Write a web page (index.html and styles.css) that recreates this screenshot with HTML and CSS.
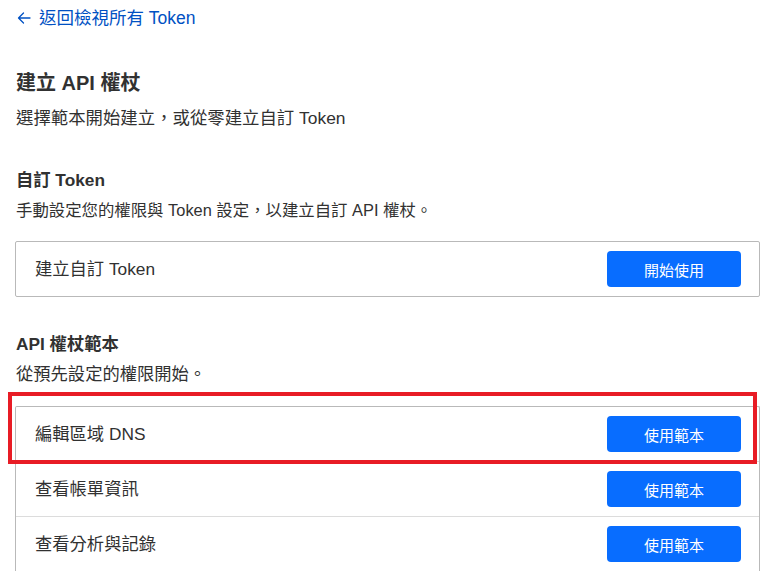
FILE: index.html
```html
<!DOCTYPE html>
<html lang="zh-Hant">
<head>
<meta charset="utf-8">
<title>建立 API 權杖</title>
<link rel="stylesheet" href="styles.css">
</head>
<body>
<div class="page">
  <a class="back" href="#">
    <svg class="back-icon" width="14" height="14" viewBox="0 0 14 14" aria-hidden="true"><path d="M13 7H1.5M6.5 2L1.5 7l5 5" fill="none" stroke="currentColor" stroke-width="1.3" stroke-linecap="round" stroke-linejoin="round"/></svg>
    <span>返回檢視所有 Token</span>
  </a>
  <h1 class="title">建立 API 權杖</h1>
  <p class="subtitle">選擇範本開始建立，或從零建立自訂 Token</p>

  <h2 class="section-title">自訂 Token</h2>
  <p class="section-desc narrow">手動設定您的權限與 Token 設定，以建立自訂 API 權杖。</p>
  <div class="card first">
    <div class="row"><span class="row-label">建立自訂 Token</span><button class="btn">開始使用</button></div>
  </div>

  <h2 class="section-title second">API 權杖範本</h2>
  <p class="section-desc">從預先設定的權限開始。</p>
  <div class="templates">
    <div class="card">
      <div class="row"><span class="row-label">編輯區域 DNS</span><button class="btn">使用範本</button></div>
      <div class="row"><span class="row-label">查看帳單資訊</span><button class="btn">使用範本</button></div>
      <div class="row"><span class="row-label">查看分析與記錄</span><button class="btn">使用範本</button></div>
    </div>
    <div class="highlight"></div>
  </div>
</div>
</body>
</html>
```

FILE: styles.css
```css
* { box-sizing: border-box; }
html, body { margin: 0; padding: 0; background: #fff; }
body {
  font-family: "Liberation Sans", "Noto Sans CJK TC", sans-serif;
  color: #313131;
  overflow: hidden;
}
.page {
  padding: 6px 0 0 16px;
  width: 761px;
}
.back {
  display: flex;
  align-items: center;
  gap: 8px;
  height: 24px;
  color: #0051c3;
  text-decoration: none;
  font-size: 17.5px;
  line-height: 24px;
}
.back-icon { margin-left: 1px; }
.title {
  margin: 39px 0 0;
  font-size: 20px;
  line-height: 28px;
  font-weight: 700;
  color: #313131;
}
.subtitle {
  margin: 9px 0 0;
  font-size: 17.4px;
  line-height: 24px;
}
.section-title {
  margin: 38px 0 0;
  font-size: 17.3px;
  line-height: 24px;
  font-weight: 700;
}
.section-title.second { margin-top: 35px; }
.section-desc {
  margin: 6px 0 0;
  font-size: 17.3px;
  line-height: 24px;
}
.section-desc.narrow { font-size: 16.4px; }
.card {
  border: 1px solid #b9b9b9;
  border-radius: 2px;
  background: #fff;
  margin-top: 19px;
  margin-left: -1px;
  width: 745px;
}
.templates { position: relative; margin-top: 20px; }
.templates .card { margin-top: 0; border-bottom: none; border-radius: 2px 2px 0 0; }
.row {
  display: flex;
  align-items: center;
  justify-content: space-between;
  padding: 9px 18px 9px 19px;
  min-height: 54px;
}
.templates .row + .row { border-top: 1px solid #dcdcdc; }
.row-label { font-size: 17.3px; line-height: 24px; color: #313131; }
.btn {
  width: 134px;
  height: 36px;
  border: none;
  border-radius: 4px;
  background: #086dff;
  color: #fff;
  font-family: "Liberation Sans", "Noto Sans CJK TC", sans-serif;
  font-size: 15px;
  cursor: pointer;
}
.highlight {
  position: absolute;
  left: -8px;
  top: -14px;
  width: 749px;
  height: 72px;
  border: 4px solid #e81c25;
  pointer-events: none;
}
```
